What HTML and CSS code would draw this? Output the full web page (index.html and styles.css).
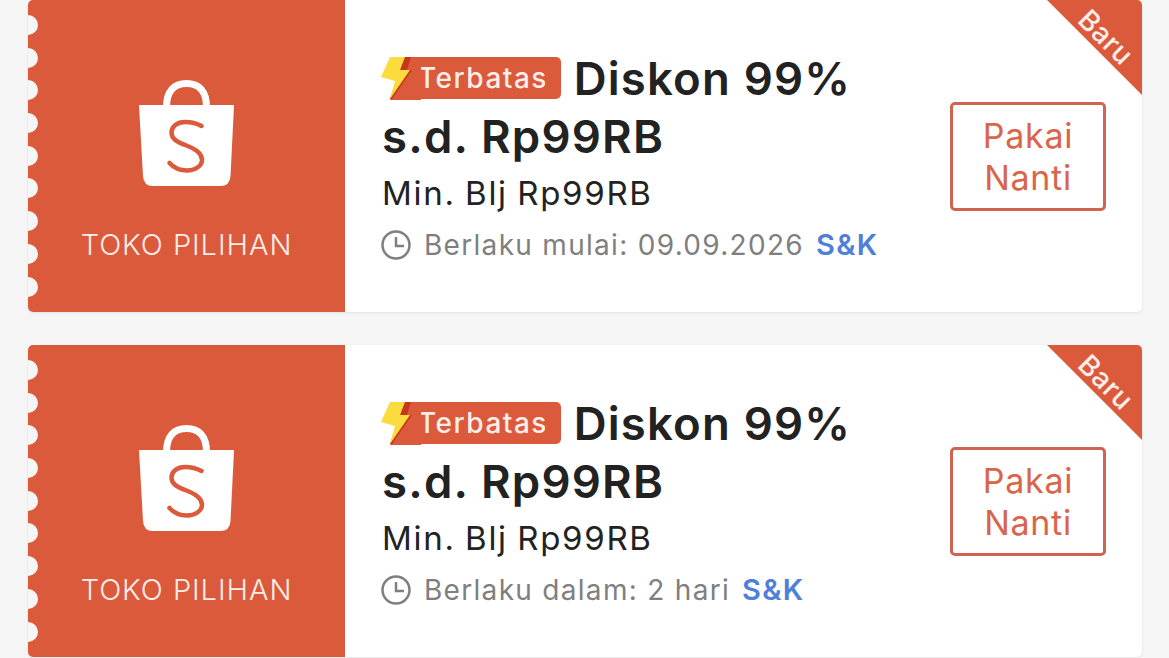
FILE: index.html
```html
<!DOCTYPE html>
<html lang="id">
<head>
<meta charset="utf-8">
<title>Voucher</title>
<link rel="stylesheet" href="styles.css">
</head>
<body>
<main class="list">
  <article class="voucher">
    <div class="stub">
      <div class="notches"><i></i><i></i><i></i><i></i><i></i><i></i><i></i><i></i><i></i></div>
      <svg class="bag" viewBox="0 0 95 106"><path class="bag-handle" d="M27.500 27C27.500 11 35 3.500 47.500 3.500S67.500 11 67.500 27"/><path class="bag-body" d="M0 25.500Q0 25 .5 25H94.500Q95 25 95 25.500L91.500 96Q91 106 81 106H14Q4.500 106 4 96Z"/><path class="bag-s" d="M62.500 46C57 43 51 42 46 42C38 42 32.500 46.500 32.500 52.500C32.500 59 38 62 47.500 65.500C57 69 63 73 63 80C63 86 56 90.500 48 90.500C41 90.500 35 88 30.500 83"/></svg>
      <span class="shop">TOKO PILIHAN</span>
    </div>
    <div class="content">
      <div class="info">
        <h2 class="title"><span class="tag"><svg class="bolt" viewBox="0 0 40 43"><path class="bolt-fill" d="M24 0H40V43H9Z"/><path class="bolt-shade" d="M23 0H30L26 13H31L11 42H9Z"/><path class="bolt-main" d="M9 0H24L19 13H29L9 42L14 24L0 20Z"/></svg><span class="tag-text">Terbatas</span></span> Diskon 99%<br>s.d. Rp99RB</h2>
        <p class="min">Min. Blj Rp99RB</p>
        <p class="meta"><svg class="clock" viewBox="0 0 30 30"><circle cx="15" cy="15" r="13.500"/><path d="M15 7V16H23"/></svg><span>Berlaku mulai: 09.09.2026</span><a class="terms">S&amp;K</a></p>
      </div>
      <button class="later">Pakai<br>Nanti</button>
    </div>
    <div class="ribbon"><span>Baru</span></div>
  </article>
  <article class="voucher">
    <div class="stub">
      <div class="notches"><i></i><i></i><i></i><i></i><i></i><i></i><i></i><i></i><i></i></div>
      <svg class="bag" viewBox="0 0 95 106"><path class="bag-handle" d="M27.500 27C27.500 11 35 3.500 47.500 3.500S67.500 11 67.500 27"/><path class="bag-body" d="M0 25.500Q0 25 .5 25H94.500Q95 25 95 25.500L91.500 96Q91 106 81 106H14Q4.500 106 4 96Z"/><path class="bag-s" d="M62.500 46C57 43 51 42 46 42C38 42 32.500 46.500 32.500 52.500C32.500 59 38 62 47.500 65.500C57 69 63 73 63 80C63 86 56 90.500 48 90.500C41 90.500 35 88 30.500 83"/></svg>
      <span class="shop">TOKO PILIHAN</span>
    </div>
    <div class="content">
      <div class="info">
        <h2 class="title"><span class="tag"><svg class="bolt" viewBox="0 0 40 43"><path class="bolt-fill" d="M24 0H40V43H9Z"/><path class="bolt-shade" d="M23 0H30L26 13H31L11 42H9Z"/><path class="bolt-main" d="M9 0H24L19 13H29L9 42L14 24L0 20Z"/></svg><span class="tag-text">Terbatas</span></span> Diskon 99%<br>s.d. Rp99RB</h2>
        <p class="min">Min. Blj Rp99RB</p>
        <p class="meta"><svg class="clock" viewBox="0 0 30 30"><circle cx="15" cy="15" r="13.500"/><path d="M15 7V16H23"/></svg><span>Berlaku dalam: 2 hari</span><a class="terms">S&amp;K</a></p>
      </div>
      <button class="later">Pakai<br>Nanti</button>
    </div>
    <div class="ribbon"><span>Baru</span></div>
  </article>
</main>
</body>
</html>
```
FILE: styles.css
```css
* { box-sizing: border-box; }
html, body { margin: 0; height: 100%; overflow: hidden; }
body { background: #f5f5f5; font-family: Inter, "Liberation Sans", sans-serif; }
.list { display: flex; flex-direction: column; gap: 33px; padding: 0 27px 0 28px; }
.voucher {
  position: relative; display: flex; height: 312px; background: #fff;
  border-radius: 5px; overflow: hidden;
  box-shadow: 0 1px 3px rgba(0,0,0,.08);
}
.stub {
  position: relative; flex: 0 0 317px; display: flex; flex-direction: column; align-items: center;
  padding-top: 80px; background: #dc5a3c; color: #fdeee9;
}
.notches {
  position: absolute; left: -10px; top: 15px; display: flex; flex-direction: column; gap: 12.700px;
}
.notches i { display: block; width: 20px; height: 20px; border-radius: 50%; background: #f5f5f5; }
.bag { display: block; width: 95px; height: 106px; }
.bag-handle { fill: none; stroke: #fff; stroke-width: 7; }
.bag-body { fill: #fff; }
.bag-s { fill: none; stroke: #dc5a3c; stroke-width: 4.500; stroke-linecap: round; }
.shop { margin-top: 42px; font-size: 29px; line-height: 34px; font-weight: 350; letter-spacing: .95px; }
.content { flex: 1; display: flex; justify-content: space-between; align-items: flex-start; padding: 0 36px 0 37px; }
.info { padding-top: 50px; }
.title { margin: 0; font-size: 45.500px; line-height: 58px; font-weight: 600; color: #222; letter-spacing: 1.200px; }
.tag {
  position: relative; display: inline-flex; align-items: center; height: 42px; width: 179px;
  padding: 1px 0 0 36px; vertical-align: 7px; background: linear-gradient(#dc5a3c,#dc5a3c) right/141px 100% no-repeat;
  border-radius: 0 5px 5px 0;
}
.bolt { position: absolute; left: -1px; top: 0; width: 40px; height: 43px; }
.bolt-fill { fill: #dc5a3c; }
.bolt-shade { fill: #c7371c; }
.bolt-main { fill: #fcdb3e; }
.tag-text { font-size: 28px; line-height: 42px; font-weight: 500; color: #fdeee9; letter-spacing: 1.500px; }
.min { margin: 7px 0 0; font-size: 33px; line-height: 40px; color: #222; letter-spacing: 1.700px; word-spacing: -1.500px; }
.meta { display: flex; align-items: center; margin: 15px 0 0 -1px; font-size: 28px; line-height: 34px; color: #7f7f7f; letter-spacing: 1.300px; }
.clock { flex: none; width: 30px; height: 30px; margin-right: 13px; fill: none; stroke: #7f7f7f; stroke-width: 2.500; }
.terms { margin-left: 12px; font-size: 29px; color: #4f7fd9; font-weight: 600; }
.later {
  width: 156px; height: 109px; margin-top: 102px; padding: 0; background: #fff;
  border: 3px solid #cf6450; border-radius: 5px; color: #d9654b;
  font: 400 34px/42px Inter, "Liberation Sans", sans-serif; letter-spacing: .7px;
}
.ribbon {
  position: absolute; top: 0; right: 0; width: 95px; height: 95px;
  background: #dc5a3c; clip-path: polygon(0 0, 100% 0, 100% 100%);
}
.ribbon span {
  position: absolute; left: 24px; top: 21px; width: 70px; text-align: center;
  font-size: 28px; line-height: 32px; font-weight: 500; color: #fdeee9; letter-spacing: .5px; transform: rotate(45deg);
}
```
